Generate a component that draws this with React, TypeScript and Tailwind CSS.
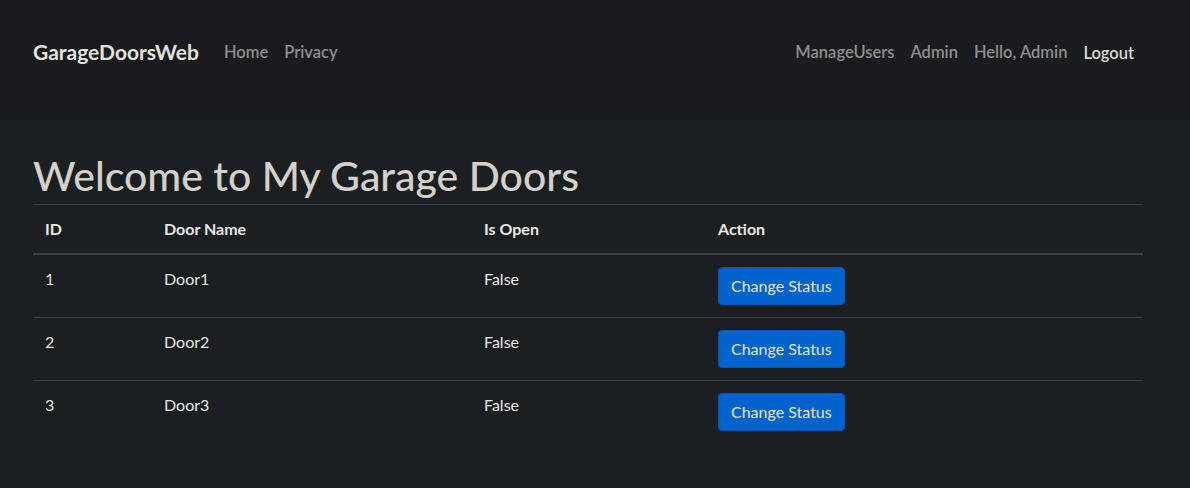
const doors = [
  { id: 1, name: 'Door1', open: 'False' },
  { id: 2, name: 'Door2', open: 'False' },
  { id: 3, name: 'Door3', open: 'False' },
];

export default function App() {
  return (
    <div className="min-h-[488px] bg-[#1c1f21] text-[#e8e6e3] font-['Lato','Open_Sans',sans-serif]">
      {/* navbar */}
      <header className="h-[120px] bg-[#1a1b1e]">
        <nav className="flex items-center px-[33px] pt-[38px]">
          <span className="text-[21px] font-bold text-[#e4e2de] mr-[25px] leading-[26px]">GarageDoorsWeb</span>
          <div className="flex gap-4 text-[16.5px] font-semibold text-[#8f8f8f] leading-[26px]">
            <span>Home</span>
            <span>Privacy</span>
          </div>
          <div className="ml-auto mr-[23px] flex items-center gap-4 text-[16.5px] font-semibold leading-[26px]">
            <span className="text-[#8f8f8f]">ManageUsers</span>
            <span className="text-[#8f8f8f]">Admin</span>
            <span className="text-[#8f8f8f]">Hello, Admin</span>
            <span className="text-[#dcdad6] pt-[2px]">Logout</span>
          </div>
        </nav>
      </header>

      <main className="px-[33px] pt-[32px]">
        <h1 className="text-[41px] font-medium leading-[48px] text-[#d4d0ca] mb-[4px]">Welcome to My Garage Doors</h1>
        <table className="w-[1110px] border-collapse text-[16px] leading-[24px]">
          <thead>
            <tr className="border-t border-[#3b3f42] border-b-2 border-b-[#3b3f42] text-left">
              <th className="w-[119px] p-3 font-bold">ID</th>
              <th className="w-[320px] p-3 font-bold">Door Name</th>
              <th className="w-[234px] p-3 font-bold">Is Open</th>
              <th className="p-3 font-bold">Action</th>
            </tr>
          </thead>
          <tbody>
            {doors.map((d, i) => (
              <tr key={d.id} className={i < doors.length - 1 ? 'border-b border-[#3b3f42]' : ''}>
                <td className="p-3 align-top">{d.id}</td>
                <td className="p-3 align-top">{d.name}</td>
                <td className="p-3 align-top">{d.open}</td>
                <td className="p-3 align-top">
                  <button className="h-[38px] px-3 rounded-[4px] bg-[#0062cc] border border-[#0059b9] text-[#e8e6e3] text-[16px]">
                    Change Status
                  </button>
                </td>
              </tr>
            ))}
          </tbody>
        </table>
      </main>
    </div>
  );
}
